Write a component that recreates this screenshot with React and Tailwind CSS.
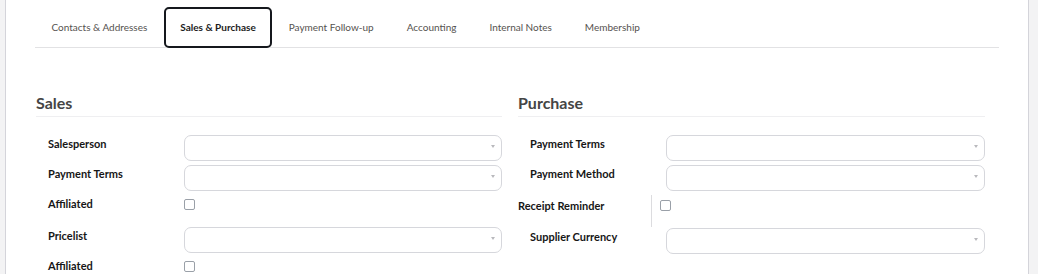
import React from 'react';

const tabs = [
  'Contacts & Addresses',
  'Sales & Purchase',
  'Payment Follow-up',
  'Accounting',
  'Internal Notes',
  'Membership',
];

const SelectBox = () => (
  <div className="flex-1 h-[26px] rounded-[7px] border border-[#d6d7dc] bg-white flex justify-end items-start pt-[9px] pr-[6px]">
    <span className="w-0 h-0 border-x-[2.5px] border-t-[3px] border-x-transparent border-t-[#b9b9bd]" />
  </div>
);

const Checkbox = () => (
  <span className="block w-[11px] h-[11px] rounded-[2px] border border-[#9aa0a8] bg-white" />
);

const SelectRow = ({ label }) => (
  <div className="flex items-start mb-[4px]">
    <div className="w-[148px] pl-[12px] pt-[1px] text-[11px] leading-[16px] font-bold text-[#161616]">{label}</div>
    <SelectBox />
  </div>
);

const CheckRow = ({ label }) => (
  <div className="flex items-start mt-[5px] h-[27px] mb-[4px]">
    <div className="w-[148px] pl-[12px] text-[11px] leading-[16px] font-bold text-[#161616]">{label}</div>
    <div className="pt-[3px]">
      <Checkbox />
    </div>
  </div>
);

const SectionTitle = ({ children }) => (
  <div className="border-b border-[#efeff1] pb-[3px] mb-[18px] text-[16px] leading-[20px] font-bold text-[#454545]">
    {children}
  </div>
);

export default function App() {
  return (
    <div className="min-h-screen bg-[#f3f3f4] pl-[5px] font-['Lato','Liberation_Sans',sans-serif]">
      <div className="w-[1024px] min-h-[274px] bg-white border-x border-[#d4d4da] px-[29px]">
        {/* Tabs */}
        <div className="flex pt-[7px] border-b border-[#e2e2e4]">
          {tabs.map((t) => {
            const active = t === 'Sales & Purchase';
            return (
              <div
                key={t}
                className={
                  active
                    ? 'h-[41px] -mb-px px-[14.5px] flex items-center rounded-[5px] border-2 border-[#15181d] bg-white text-[10px] font-bold text-[#1c1c1c]'
                    : 'h-[41px] -mb-px px-[14.5px] flex items-center border-2 border-transparent text-[10px] text-[#55524f]'
                }
              >
                {t}
              </div>
            );
          })}
        </div>

        {/* Form */}
        <div className="flex gap-[16px] pl-px pt-[45px]">
          <div className="w-[466px]">
            <SectionTitle>Sales</SectionTitle>
            <SelectRow label="Salesperson" />
            <SelectRow label="Payment Terms" />
            <CheckRow label="Affiliated" />
            <SelectRow label="Pricelist" />
            <CheckRow label="Affiliated" />
          </div>

          <div className="w-[467px]">
            <SectionTitle>Purchase</SectionTitle>
            <SelectRow label="Payment Terms" />
            <SelectRow label="Payment Method" />
            <div className="flex items-stretch mt-[4px] h-[32px] mb-[1px]">
              <div className="w-[134px] pt-[3px] border-r border-[#dcdcdf] text-[11px] leading-[16px] font-bold text-[#161616]">
                Receipt Reminder
              </div>
              <div className="pl-[8px] pt-[5px]">
                <Checkbox />
              </div>
            </div>
            <SelectRow label="Supplier Currency" />
          </div>
        </div>
      </div>
    </div>
  );
}
